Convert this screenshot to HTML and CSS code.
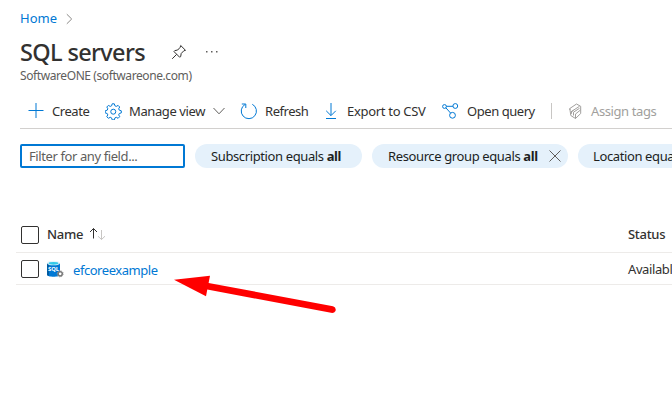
FILE: index.html
```html
<!DOCTYPE html>
<html lang="en">
<head>
<meta charset="utf-8">
<title>SQL servers</title>
<link rel="stylesheet" href="styles.css">
</head>
<body>
<main class="page">
  <nav class="crumbs">
    <a class="home">Home</a>
    <svg class="crumb-chevron" width="7" height="12" viewBox="0 0 7 12"><path d="M.8 1.200 5.700 6 .8 10.800"/></svg>
  </nav>
  <header class="heading">
    <h1>SQL servers</h1>
    <svg class="pin" width="16" height="16" viewBox="0 0 16 16"><path d="M9.700 1.500 14.500 6.300 12.800 6.800 10.200 9.500 9.700 12.500 8.600 13.200 3 7.600 3.800 6.600 6.700 6 9.200 3.300ZM5.700 10.300 1.200 14.800"/></svg>
    <svg class="more" width="14" height="4" viewBox="0 0 14 4"><path d="M1 1h1.500v1.500H1zM6 1h1.500v1.500H6zM11 1h1.500v1.500H11z"/></svg>
  </header>
  <p class="tenant">SoftwareONE (softwareone.com)</p>

  <div class="toolbar">
    <button class="cmd create"><svg width="16" height="16" viewBox="0 0 16 16"><path d="M8 0v15M.5 7.500h15"/></svg><span>Create</span></button>
    <button class="cmd manage"><svg width="17" height="17" viewBox="0 0 17 17"><path d="M7.200.8h2.100l.6 2 1.400.6 1.800-1 1.600 1.600-1 1.800.6 1.400 2 .6v2.100l-2 .6-.6 1.400 1 1.800-1.600 1.600-1.800-1-1.400.6-.6 2H7.200l-.6-2-1.400-.6-1.800 1-1.600-1.600 1-1.800-.6-1.400-2-.6V7.800l2-.6.6-1.400-1-1.800 1.600-1.600 1.800 1 1.400-.6z"/><circle cx="8.250" cy="8.700" r="2.500"/></svg><span>Manage view</span><svg class="down" width="12" height="8" viewBox="0 0 12 8"><path d="M.5 1 6 6.800 11.500 1"/></svg></button>
    <button class="cmd refresh"><svg width="18" height="18" viewBox="0 0 18 18"><path d="M12.300 2.300A7.600 7.600 0 1 1 5 2.500M1.800 2h4v4"/></svg><span>Refresh</span></button>
    <button class="cmd export"><svg width="12" height="17" viewBox="0 0 12 17"><path d="M6 0v12.500M1.200 7.800 6 12.600 10.800 7.800M1 15.500h10"/></svg><span>Export to CSV</span></button>
    <button class="cmd query"><svg width="17" height="17" viewBox="0 0 17 17"><circle cx="2.500" cy="3.500" r="1.900"/><circle cx="13.300" cy="3" r="2.400"/><circle cx="10.500" cy="12.300" r="2.900"/><path d="M4.400 3.300h6.500M3.900 4.800l4.700 5.300"/></svg><span>Open query</span></button>
    <button class="cmd tags" disabled><svg width="14" height="17" viewBox="0 0 14 17"><path d="M.8 5.500 7.500 1 11.700 3.300V10.500L6.500 15.500 1.800 12.500 .8 5.500M2 8.800 10.500 3.300M2.500 10.800V8.800L4.500 7.300M4.500 12.500V9.200L10.500 5.300M6.500 15.500V11L11.500 7M.8 5.500 1 7"/></svg><span>Assign tags</span></button>
  </div>

  <div class="filters">
    <input class="search" type="text" placeholder="Filter for any field...">
    <div class="pill subscription"><span>Subscription equals <b>all</b></span></div>
    <div class="pill group"><span>Resource group equals <b>all</b></span><svg width="12" height="12" viewBox="0 0 12 12"><path d="M.5.5 11.500 11.500M11.500.5.5 11.500"/></svg></div>
    <div class="pill location"><span>Location equals <b>all</b></span></div>
  </div>

  <section class="grid">
    <div class="row head">
      <span class="check"></span><span class="name">Name</span>
      <svg class="sort" width="17" height="14" viewBox="0 0 17 14"><path d="M4.500 11.500V1.500M1 5 4.500 1.500 8 5"/><path class="faint" d="M12.500 3v9.500M9 9.200l3.500 3.300 3.500-3.300"/></svg>
      <span class="status">Status</span>
    </div>
    <div class="row item">
      <span class="check"></span>
      <svg class="db" width="18" height="18" viewBox="0 0 18 18"><path fill="#0078d4" d="M1 3v11.500C1 15.800 4 16.800 7.500 16.800S14 15.800 14 14.500V3z"/><path fill="#005ba1" d="M1 3v11.500c0 .7.800 1.200 2 1.600V4z"/><ellipse cx="7.500" cy="3" rx="6.500" ry="2.300" fill="#e8f5fa"/><ellipse cx="7.500" cy="3.300" rx="5" ry="1.400" fill="#32c9e8"/><text x="7.600" y="11.300">SQL</text><circle cx="14.200" cy="13.800" r="2.100" class="cog"/><circle cx="14.200" cy="13.800" r="3" class="teeth"/></svg>
      <a class="name">efcoreexample</a>
      <span class="status">Available</span>
    </div>
  </section>
  <svg class="arrow" width="164" height="42" viewBox="0 0 164 42"><path d="M0 4.700 36 .7 34.600 7.900 159 31.200Q162.500 32.500 161.500 36 160 38.500 157 37.800L33.300 14.600 32 21.200Z"/></svg>
</main>
</body>
</html>
```

FILE: styles.css
```css
* { box-sizing: border-box; }
body { margin: 0; background: #fff; color: #323130; font: 13px/18px "Noto Sans", sans-serif; overflow: hidden; }
svg { display: block; flex: none; fill: none; stroke: #605e5c; stroke-width: 1; }
.page { position: relative; width: 672px; height: 404px; overflow: hidden; padding: 8px 0 0 20px; white-space: nowrap; }
.crumbs { display: flex; align-items: center; height: 20px; }
.home { width: 46px; color: #0078d4; }
.crumb-chevron { stroke: #8a8886; margin-top: 2px; }
.heading { display: flex; align-items: center; height: 38px; margin-top: 5px; }
h1 { width: 151px; margin: 0; font-size: 23.5px; line-height: 32px; font-weight: 550; letter-spacing: -.65px; }
.pin { stroke: #323130; }
.more { margin-left: 18px; fill: #605e5c; stroke: none; }
.tenant { height: 16px; margin: -3px 0 0; color: #605e5c; font-size: 12px; line-height: 16px; letter-spacing: -.41px; }
.toolbar { display: flex; align-items: center; height: 45px; border-bottom: 1px solid #d2d0ce; padding: 11px 0 1px 8px; }
.cmd { display: flex; align-items: center; flex: none; height: 22px; padding: 0; border: 0; background: none; color: #323130; font: inherit; letter-spacing: -.45px; }
.cmd svg { stroke: #0078d4; }
.create { width: 77px; }
.create span { margin-left: 8px; }
.manage { width: 135px; }
.manage span { width: 84px; margin-left: 7px; text-align: left; letter-spacing: -.4px; }
.cmd .down { stroke: #605e5c; }
.refresh { width: 85px; }
.refresh span { margin-left: 7px; }
.export { width: 117px; }
.export span { margin-left: 10px; letter-spacing: -.3px; }
.query { width: 109px; }
.query span { margin-left: 8px; }
.tags { color: #a19f9d; border-left: 1px solid #c8c6c4; height: 16px; padding-left: 17px; letter-spacing: -.4px; }
.tags svg { stroke: #a19f9d; }
.tags span { margin-left: 8px; }
.filters { display: flex; height: 24px; margin-top: 15px; gap: 10px; }
.search { flex: none; width: 165px; height: 24px; border: 2px solid #0078d4; border-radius: 2px; padding: 0 7px; color: #323130; font: 13px/18px "Noto Sans", sans-serif; letter-spacing: -.4px; outline: none; }
.search::placeholder { color: #605e5c; opacity: 1; }
.pill { display: flex; align-items: center; flex: none; height: 24px; border-radius: 12px; padding-left: 16px; background: #e5f1fb; color: #201f1e; letter-spacing: -.38px; }
.subscription { width: 167px; }
.group { width: 196px; }
.group span { width: 161px; }
.location { width: 150px; padding-left: 15px; }
.grid { margin: 49px 0 0 -4px; }
.row { display: flex; align-items: center; border-bottom: 1px solid #edebe9; padding-left: 5px; }
.head { height: 36px; font-weight: 500; letter-spacing: -.3px; }
.item { height: 32px; }
.check { flex: none; width: 18px; height: 18px; border: 1px solid #323130; border-radius: 2px; }
.row .name, .row .status { flex: none; }
.head .name { width: 42px; margin-left: 8px; }
.head .name, .head .status { padding-bottom: 2px; }
.sort { stroke: #323130; margin-bottom: 2px; }
.sort .faint { stroke: #c8c6c4; }
.head .status { margin-left: 522px; }
.db { margin-left: 7px; stroke: none; }
.db text { fill: #fff; font: 700 5.800px "Noto Sans", sans-serif; text-anchor: middle; }
.cog { fill: #fff; stroke: #767676; stroke-width: 1.500px; }
.teeth { stroke: #999; stroke-width: 1px; stroke-dasharray: 1.200 1.150; }
.item .name { width: 555px; margin-left: 9px; padding-top: 2px; color: #0078d4; letter-spacing: -.45px; }
.item .status { letter-spacing: -.4px; }
.arrow { position: absolute; left: 174px; top: 275px; fill: #f00; stroke: none; }
```
